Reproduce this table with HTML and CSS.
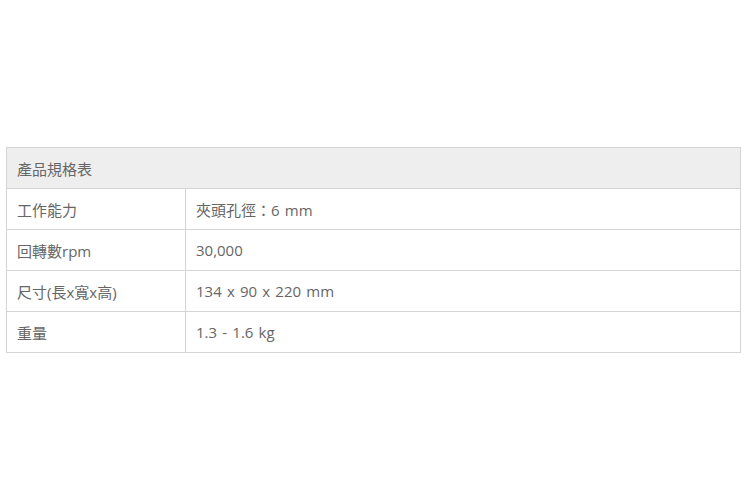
FILE: index.html
```html
<!DOCTYPE html>
<html lang="zh-Hant">
<head>
<meta charset="utf-8">
<link rel="stylesheet" href="styles.css">
</head>
<body>
<div class="page">
  <table class="spec">
    <thead>
      <tr><th colspan="2">產品規格表</th></tr>
    </thead>
    <tbody>
      <tr><td class="key">工作能力</td><td>夾頭孔徑：6 mm</td></tr>
      <tr><td class="key">回轉數rpm</td><td>30,000</td></tr>
      <tr><td class="key">尺寸(長x寬x高)</td><td>134 x 90 x 220 mm</td></tr>
      <tr><td class="key">重量</td><td>1.3 - 1.6 kg</td></tr>
    </tbody>
  </table>
</div>
</body>
</html>
```
FILE: styles.css
```css
html, body { margin: 0; padding: 0; background: #fff; }
.page { padding: 147px 0 0 6px; }
.spec {
  width: 735px;
  border-collapse: collapse;
  font-family: "Open Sans", "Noto Sans CJK TC", sans-serif;
  font-size: 15px;
  color: #666;
  word-spacing: 1.3px;
}
.spec th, .spec td {
  border: 1px solid #d4d4d4;
  height: 41px;
  padding: 0 10px;
  text-align: left;
  font-weight: normal;
  box-sizing: border-box;
  vertical-align: middle;
}
.spec th { background: #eeeeee; }
.spec td.key { width: 179px; }
```
